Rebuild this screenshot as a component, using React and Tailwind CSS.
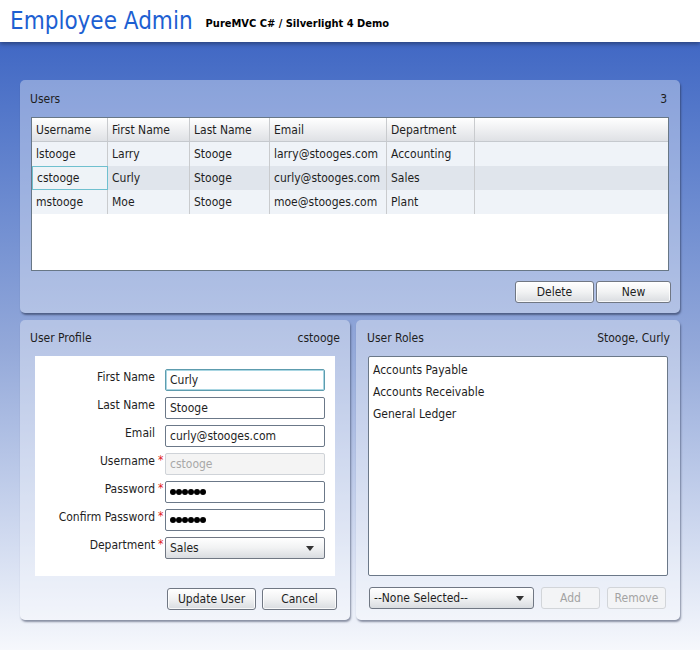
import React from "react";

const F = "font-['DejaVu_Sans_Condensed','DejaVu_Sans',sans-serif]";

function Tri() {
  return (
    <svg width="8" height="5" viewBox="0 0 8 5" className="shrink-0">
      <path d="M0 0 L8 0 L4 5 Z" fill="#333" />
    </svg>
  );
}

function Btn({ children, w, disabled }) {
  return (
    <div
      className={
        "h-[22px] flex items-center justify-center rounded-[3px] border text-[12px] " +
        (disabled
          ? "border-[#d2d5d9] bg-[#f3f4f6] text-[#a3a3a3]"
          : "border-[#707783] bg-gradient-to-b from-[#ffffff] via-[#f1f2f3] to-[#d9dce0] text-[#1e1e1e] shadow-[inset_0_0_0_1px_rgba(255,255,255,0.8)]")
      }
      style={{ width: w }}
    >
      {children}
    </div>
  );
}

function Dots() {
  return (
    <div className="flex">
      {[0, 1, 2, 3, 4, 5].map((i) => (
        <div key={i} className="w-[6px] h-[6px] rounded-full bg-black" />
      ))}
    </div>
  );
}

function Field({ label, req, children, kind }) {
  let box;
  if (kind === "focus")
    box = "border border-[#5d9cae] shadow-[inset_0_0_0_1px_#a9d6e2] bg-white";
  else if (kind === "disabled") box = "border border-[#cfd3d8] bg-[#f4f4f4] text-[#a8a8a8]";
  else if (kind === "select")
    box = "border border-[#707783] bg-gradient-to-b from-[#ffffff] via-[#f1f2f3] to-[#d9dce0] justify-between pr-[10px]";
  else box = "border border-[#6b7888] bg-white";
  return (
    <div className="flex items-start h-[22px]">
      <div className="w-[120px] text-right text-[12px] leading-[16px] text-[#1e1e1e]">{label}</div>
      <div className="w-[10px] pl-[3px] text-[#e02020] text-[12px] leading-[14px]">{req ? "*" : ""}</div>
      <div className={"w-[160px] h-[22px] rounded-[2px] flex items-center pl-[4px] text-[12px] " + box}>{children}</div>
    </div>
  );
}

export default function App() {
  const cols = [
    { t: "Username", w: 76 },
    { t: "First Name", w: 82 },
    { t: "Last Name", w: 80 },
    { t: "Email", w: 117 },
    { t: "Department", w: 88 },
  ];
  const rows = [
    ["lstooge", "Larry", "Stooge", "larry@stooges.com", "Accounting"],
    ["cstooge", "Curly", "Stooge", "curly@stooges.com", "Sales"],
    ["mstooge", "Moe", "Stooge", "moe@stooges.com", "Plant"],
  ];
  return (
    <div className={"w-[700px] h-[650px] overflow-hidden flex flex-col text-[#1e1e1e] " + F}>
      <div className="h-[42px] bg-white relative z-10 shadow-[0_2px_4px_rgba(0,0,0,0.35)] flex items-end pb-[7px] pl-[10px]">
        <div className="text-[24px] leading-[28px] text-[#1d5fd2]">Employee Admin</div>
        <div className="ml-[13px] mb-[4px] text-[11px] font-bold text-black leading-[14px]">PureMVC C# / Silverlight 4 Demo</div>
      </div>
      <div className="flex-1 bg-gradient-to-b from-[#4168c4] via-[#93a8d9] to-[#f6f8fc] px-[20px] pt-[38px]">
        {/* Users panel */}
        <div className="h-[233px] rounded-[5px] bg-white/35 shadow-[1px_2px_2px_rgba(40,50,80,0.6)] px-[11px] pt-[10px] flex flex-col">
          <div className="flex justify-between text-[12px] leading-[16px] pr-[2px] -ml-[1px] mt-[1px]">
            <span>Users</span>
            <span>3</span>
          </div>
          <div className="mt-[10px] h-[154px] border border-[#687786] bg-white flex flex-col">
            <div className="h-[24px] flex bg-gradient-to-b from-[#ffffff] to-[#dfe1e5] border-b border-[#c5c9ce]">
              {cols.map((c) => (
                <div key={c.t} className="h-full border-r border-[#c9cbce] pl-[4px] flex items-center text-[12px]" style={{ width: c.w }}>
                  {c.t}
                </div>
              ))}
            </div>
            {rows.map((r, ri) => (
              <div key={ri} className={"h-[24px] flex " + (ri === 1 ? "bg-[#e0e5ec]" : "bg-[#eff3f8]")}>
                {r.map((v, ci) => (
                  <div
                    key={ci}
                    className={
                      "h-full pl-[4px] flex items-center text-[12px] " +
                      (ri === 1 && ci === 0 ? "border border-[#6fc0cf] bg-[#eef3f7] pl-[3px]" : "border-r border-[#c9cbce]")
                    }
                    style={{ width: cols[ci].w }}
                  >
                    {v}
                  </div>
                ))}
                <div className="flex-1" />
              </div>
            ))}
          </div>
          <div className="mt-[10px] flex justify-end gap-[2px] -mr-[2px]">
            <Btn w={79}>Delete</Btn>
            <Btn w={75}>New</Btn>
          </div>
        </div>
        {/* Bottom row */}
        <div className="mt-[7px] flex gap-[6px]">
          <div className="w-[330px] h-[300px] rounded-[5px] bg-white/35 shadow-[1px_2px_2px_rgba(40,50,80,0.5)] pt-[10px] flex flex-col">
            <div className="flex justify-between text-[12px] leading-[16px] pl-[10px] pr-[10px]">
              <span>User Profile</span>
              <span>cstooge</span>
            </div>
            <div className="mx-[15px] mt-[10px] h-[220px] bg-white pt-[13px] flex flex-col gap-[6px]">
              <Field label="First Name" kind="focus">Curly</Field>
              <Field label="Last Name">Stooge</Field>
              <Field label="Email">curly@stooges.com</Field>
              <Field label="Username" req kind="disabled">cstooge</Field>
              <Field label="Password" req><Dots /></Field>
              <Field label="Confirm Password" req><Dots /></Field>
              <Field label="Department" req kind="select">
                <span>Sales</span>
                <Tri />
              </Field>
            </div>
            <div className="mt-[12px] flex justify-end gap-[6px] pr-[13px]">
              <Btn w={89}>Update User</Btn>
              <Btn w={75}>Cancel</Btn>
            </div>
          </div>
          <div className="w-[324px] h-[300px] rounded-[5px] bg-white/35 shadow-[1px_2px_2px_rgba(40,50,80,0.5)] pt-[10px] flex flex-col">
            <div className="flex justify-between text-[12px] leading-[16px] pl-[11px] pr-[10px]">
              <span>User Roles</span>
              <span>Stooge, Curly</span>
            </div>
            <div className="mx-[12px] mt-[10px] h-[220px] bg-white border border-[#6b7888] rounded-[2px] pt-[2px] pl-[4px] flex flex-col text-[12px]">
              <div className="h-[22px] flex items-center">Accounts Payable</div>
              <div className="h-[22px] flex items-center">Accounts Receivable</div>
              <div className="h-[22px] flex items-center">General Ledger</div>
            </div>
            <div className="mt-[11px] flex pl-[13px] gap-[7px]">
              <div className="w-[165px] h-[22px] rounded-[3px] border border-[#707783] bg-gradient-to-b from-[#ffffff] via-[#f1f2f3] to-[#d9dce0] flex items-center justify-between pl-[4px] pr-[9px] text-[12px]">
                <span>--None Selected--</span>
                <Tri />
              </div>
              <Btn w={59} disabled>Add</Btn>
              <Btn w={59} disabled>Remove</Btn>
            </div>
          </div>
        </div>
      </div>
    </div>
  );
}
